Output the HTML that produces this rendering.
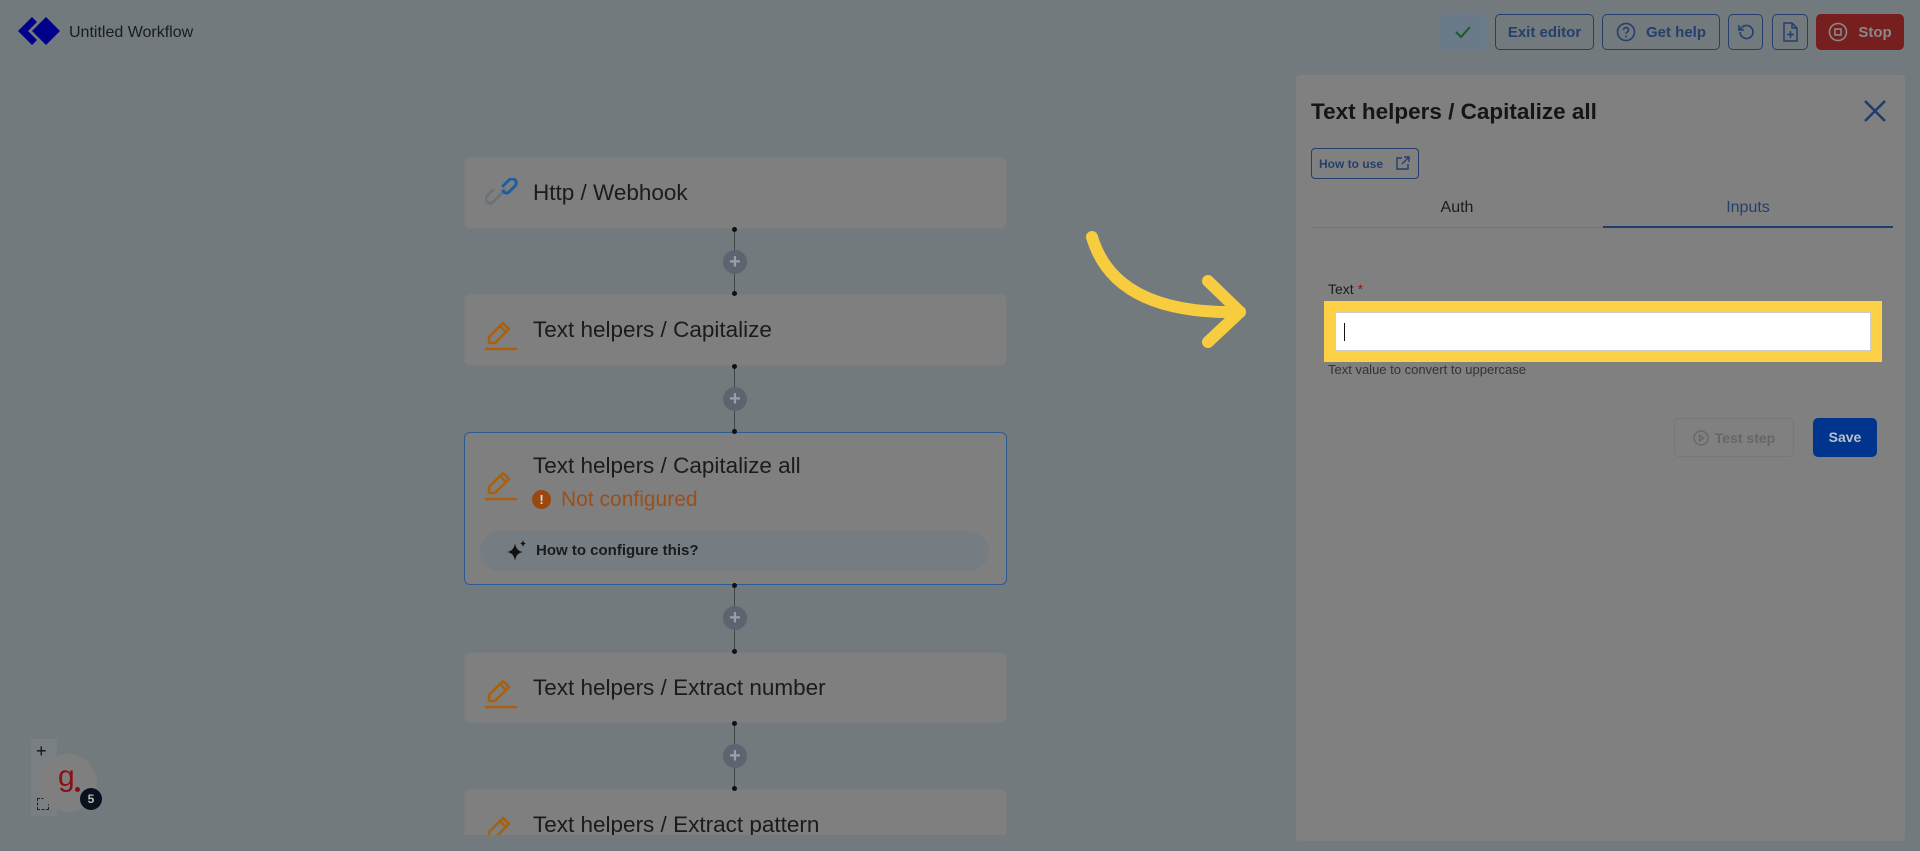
<!DOCTYPE html>
<html><head><meta charset="utf-8"><style>
*{box-sizing:border-box;margin:0;padding:0}
body{width:1920px;height:851px;overflow:hidden;background:#737a7e;font-family:"Liberation Sans",sans-serif;position:relative}
.abs{position:absolute}
.btn{position:absolute;top:14px;height:36px;border:1px solid #243f6b;border-radius:5px;color:#243f6b;font-weight:bold;font-size:15px;display:flex;align-items:center;justify-content:center;gap:10px}
.card{position:absolute;left:464px;width:543px;background:#7f7f7f;border:1px solid #777c80;border-radius:6px}
.card .t{position:absolute;left:68px;top:22px;font-size:22.5px;color:#1b1b1b}
.card svg{position:absolute;left:20px;top:20px}
.plus{position:absolute;left:723px;width:24px;height:24px;border-radius:50%;background:#5c6470;color:#9aa0a8;font-size:20px;font-weight:bold;text-align:center;line-height:24px}
.dot{position:absolute;left:732px;width:5px;height:5px;border-radius:50%;background:#111}
.vl{position:absolute;left:734px;width:1px;background:#444}
</style></head><body>
<svg class="abs" style="left:15px;top:16px" width="46" height="30" viewBox="0 0 46 30"><path d="M17 1 L3 15 L17 29 L22 24 L13 15 L22 6Z" fill="#00008a"/><path d="M31 1 L45 15 L31 29 L17 15Z" fill="#00008a"/></svg>
<div class="abs" style="left:69px;top:24px;font-size:16px;color:#1b1b1b">Untitled Workflow</div>

<div class="btn" style="left:1439px;width:48px;background:#6a7a88;border-color:#6a7a88"><svg width="16" height="14" viewBox="0 0 16 14"><path d="M1 7 L6 12 L15 2" stroke="#1c5a2a" stroke-width="2" fill="none"/></svg></div>
<div class="btn" style="left:1495px;width:99px">Exit editor</div>
<div class="btn" style="left:1602px;width:118px"><svg width="20" height="20" viewBox="0 0 20 20"><circle cx="10" cy="10" r="8.5" stroke="#243f6b" stroke-width="1.6" fill="none"/><path d="M7.5 8a2.5 2.5 0 1 1 3.5 2.3c-.7.3-1 .8-1 1.5" stroke="#243f6b" stroke-width="1.6" fill="none"/><circle cx="10" cy="14.5" r="1" fill="#243f6b"/></svg>Get help</div>
<div class="btn" style="left:1728px;width:35px"><svg width="20" height="20" viewBox="0 0 20 20"><path d="M4 10a6.5 6.5 0 1 0 2-4.7L3 8M3 3v5h5" stroke="#243f6b" stroke-width="1.6" fill="none"/></svg></div>
<div class="btn" style="left:1772px;width:36px"><svg width="16" height="20" viewBox="0 0 16 20"><path d="M2 1h8l5 5v13H2Z M10 1v5h5 M8.5 9v7 M5 12.5h7" stroke="#243f6b" stroke-width="1.5" fill="none"/></svg></div>
<div class="btn" style="left:1816px;width:88px;background:#771e1e;border-color:#771e1e;color:#8a8a8a"><svg width="20" height="20" viewBox="0 0 20 20"><circle cx="10" cy="10" r="8.5" stroke="#8a8a8a" stroke-width="1.6" fill="none"/><rect x="7" y="7" width="6" height="6" stroke="#8a8a8a" stroke-width="1.6" fill="none"/></svg>Stop</div>

<div class="vl" style="top:229px;height:65px"></div>
<div class="vl" style="top:366px;height:66px"></div>
<div class="vl" style="top:585px;height:67px"></div>
<div class="vl" style="top:723px;height:66px"></div>

<div class="card" style="top:157px;height:72px"><svg width="36" height="30" viewBox="0 0 36 30"><path d="M14 18 L8 24 a4 4 0 0 1 -6 -6 L8 12" stroke="#6a737c" stroke-width="3" fill="none" stroke-linecap="round"/><path d="M12 20 L20 12" stroke="#6a737c" stroke-width="3" stroke-linecap="round"/><path d="M18 8 L24 2 a4 4 0 0 1 6 6 L24 14 a4 4 0 0 1 -6 -1" stroke="#1b5fa0" stroke-width="3" fill="none" stroke-linecap="round"/></svg><div class="t">Http / Webhook</div></div>
<div class="card" style="top:294px;height:72px"><svg width="34" height="36" viewBox="0 0 34 36"><path d="M4 22 L18 8 L24 14 L10 28 H4Z M15 11 L21 17" stroke="#a8600e" stroke-width="2.5" fill="none" stroke-linejoin="round"/><path d="M0 34 H32" stroke="#a8600e" stroke-width="2.5"/></svg><div class="t">Text helpers / Capitalize</div></div>
<div class="card" style="top:432px;height:153px;border-color:#2c5c96"><svg width="34" height="36" viewBox="0 0 34 36" style="top:32px"><path d="M4 22 L18 8 L24 14 L10 28 H4Z M15 11 L21 17" stroke="#a8600e" stroke-width="2.5" fill="none" stroke-linejoin="round"/><path d="M0 34 H32" stroke="#a8600e" stroke-width="2.5"/></svg><div class="t" style="top:20px">Text helpers / Capitalize all</div>
<div class="abs" style="left:67px;top:57px;width:19px;height:19px;border-radius:50%;background:#9b4710;color:#ddd;font-size:13px;font-weight:bold;text-align:center;line-height:19px">!</div>
<div class="abs" style="left:96px;top:55px;font-size:21px;color:#9b4f1a">Not configured</div>
<div class="abs" style="left:15px;top:98px;width:509px;height:40px;border-radius:20px;background:#757c82"><svg class="abs" style="left:26px;top:8px" width="22" height="24" viewBox="0 0 22 24"><path d="M9 4 Q10 12 17 13 Q10 14 9 22 Q8 14 1 13 Q8 12 9 4Z" fill="#111"/><path d="M17 1 Q17.5 4 20 4.5 Q17.5 5 17 8 Q16.5 5 14 4.5 Q16.5 4 17 1Z" fill="#111"/></svg><div class="abs" style="left:56px;top:11px;font-size:15px;font-weight:bold;color:#1b1b1b">How to configure this?</div></div></div>
<div class="card" style="top:652px;height:71px"><svg width="34" height="36" viewBox="0 0 34 36"><path d="M4 22 L18 8 L24 14 L10 28 H4Z M15 11 L21 17" stroke="#a8600e" stroke-width="2.5" fill="none" stroke-linejoin="round"/><path d="M0 34 H32" stroke="#a8600e" stroke-width="2.5"/></svg><div class="t">Text helpers / Extract number</div></div>
<div class="card" style="top:789px;height:46px;border-bottom:none;border-radius:6px 6px 0 0;overflow:hidden"><svg width="34" height="34" viewBox="0 0 34 34"><path d="M4 22 L18 8 L24 14 L10 28 H4Z M15 11 L21 17" stroke="#a8600e" stroke-width="2.5" fill="none" stroke-linejoin="round"/></svg><div class="t">Text helpers / Extract pattern</div></div>

<div class="dot" style="top:227px"></div><div class="dot" style="top:291px"></div>
<div class="dot" style="top:364px"></div><div class="dot" style="top:429px"></div>
<div class="dot" style="top:583px"></div><div class="dot" style="top:649px"></div>
<div class="dot" style="top:721px"></div><div class="dot" style="top:786px"></div>
<div class="plus" style="top:250px">+</div>
<div class="plus" style="top:387px">+</div>
<div class="plus" style="top:606px">+</div>
<div class="plus" style="top:744px">+</div>

<svg class="abs" style="left:1080px;top:225px" width="180" height="135" viewBox="0 0 180 135"><path d="M12 12 Q35 90 160 87" stroke="#f7cd3f" stroke-width="12" fill="none" stroke-linecap="round"/><path d="M128 56 L160 87 L128 117" stroke="#f7cd3f" stroke-width="12" fill="none" stroke-linecap="round" stroke-linejoin="round"/></svg>

<div class="abs" style="left:1296px;top:75px;width:609px;height:766px;background:#808080;border-radius:4px">
<div class="abs" style="left:15px;top:24px;font-size:22.5px;font-weight:bold;color:#151515">Text helpers / Capitalize all</div>
<svg class="abs" style="left:567px;top:24px" width="24" height="24" viewBox="0 0 24 24"><path d="M2 2L22 22M22 2L2 22" stroke="#1e3d6b" stroke-width="2.6"/></svg>
<div class="abs" style="left:15px;top:73px;width:108px;height:31px;border:1px solid #243f6b;border-radius:4px;color:#243f6b;font-size:12px;font-weight:bold;padding:8px 0 0 7px">How to use <svg style="position:absolute;left:84px;top:7px" width="14" height="14" viewBox="0 0 14 14"><path d="M6 2H1v11h11V8 M8 1h5v5 M13 1 L6 8" stroke="#243f6b" stroke-width="1.4" fill="none"/></svg></div>
<div class="abs" style="left:15px;top:124px;width:292px;text-align:center;font-size:16px;color:#1b1b1b">Auth</div>
<div class="abs" style="left:307px;top:124px;width:290px;text-align:center;font-size:16px;color:#243f6b">Inputs</div>
<div class="abs" style="left:15px;top:152px;width:292px;height:1px;background:#6e7478"></div>
<div class="abs" style="left:307px;top:151px;width:290px;height:2px;background:#1e3d6b"></div>
<div class="abs" style="left:32px;top:206px;font-size:14px;color:#1b1b1b">Text <span style="color:#8b1a1a">*</span></div>
<div class="abs" style="left:28px;top:226px;width:558px;height:61px;background:#fed046"></div>
<div class="abs" style="left:39px;top:237px;width:536px;height:39px;background:#fff;border:1px solid #ccc"><div class="abs" style="left:8px;top:10px;width:1px;height:18px;background:#111"></div></div>
<div class="abs" style="left:32px;top:287px;font-size:13px;color:#333">Text value to convert to uppercase</div>
<div class="abs" style="left:378px;top:343px;width:120px;height:39px;border:1px solid #777;border-radius:5px;color:#666;font-size:14px;font-weight:bold;display:flex;align-items:center;justify-content:center;gap:6px"><svg width="16" height="16" viewBox="0 0 16 16"><circle cx="8" cy="8" r="7" stroke="#666" stroke-width="1.3" fill="none"/><path d="M6.5 5v6l4-3z" stroke="#666" stroke-width="1.2" fill="none"/></svg>Test step</div>
<div class="abs" style="left:517px;top:343px;width:64px;height:39px;background:#01348d;border-radius:5px;color:#b8c0cc;font-size:14px;font-weight:bold;text-align:center;line-height:39px">Save</div>
</div>

<div class="abs" style="left:31px;top:739px;width:26px;height:77px;background:#7a7f83"></div>
<div class="abs" style="left:36px;top:741px;font-size:18px;color:#111">+</div>
<div class="abs" style="left:37px;top:798px;width:12px;height:12px;border:1.5px dashed #222"></div>
<div class="abs" style="left:39px;top:754px;width:58px;height:58px;border-radius:50%;background:#7f7f7f"></div>
<div class="abs" style="left:58px;top:760px;font-size:30px;color:#8a0f16">g</div>
<div class="abs" style="left:75px;top:787px;width:5px;height:5px;border-radius:50%;background:#8a0f16"></div>
<div class="abs" style="left:80px;top:788px;width:22px;height:22px;border-radius:50%;background:#0b111c;color:#bbb;font-size:12px;font-weight:bold;text-align:center;line-height:22px">5</div>
</body></html>
